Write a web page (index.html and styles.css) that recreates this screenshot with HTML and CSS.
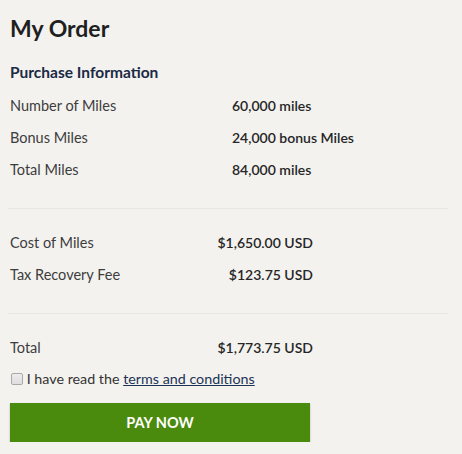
FILE: index.html
```html
<!DOCTYPE html>
<html>
<head>
<meta charset="utf-8">
<link rel="stylesheet" href="styles.css">
</head>
<body>
<div class="order">
  <h1 class="title">My Order</h1>
  <h2 class="subtitle">Purchase Information</h2>
  <div class="rows miles">
    <div class="label">Number of Miles</div><div class="value">60,000 miles</div>
    <div class="label">Bonus Miles</div><div class="value">24,000 bonus Miles</div>
    <div class="label">Total Miles</div><div class="value">84,000 miles</div>
  </div>
  <div class="divider"></div>
  <div class="rows money cost">
    <div class="label">Cost of Miles</div><div class="value">$1,650.00 USD</div>
    <div class="label">Tax Recovery Fee</div><div class="value">$123.75 USD</div>
  </div>
  <div class="divider"></div>
  <div class="rows money total">
    <div class="label">Total</div><div class="value">$1,773.75 USD</div>
  </div>
  <label class="agree"><input type="checkbox" class="check"> I have read the <a class="link" href="#">terms and conditions</a></label>
  <button class="pay">PAY NOW</button>
</div>
</body>
</html>
```
FILE: styles.css
```css
html, body {
  margin: 0;
  padding: 0;
  background: #f3f2ef;
}
body {
  font-family: "Lato", "Liberation Sans", sans-serif;
  color: #3a3a3a;
}
.order {
  padding: 14px 0 0 10px;
  width: 438px;
  display: flex;
  flex-direction: column;
  align-items: flex-start;
}
.title {
  margin: 0;
  font-size: 23px;
  line-height: 28px;
  font-weight: 700;
  color: #1f1f1f;
}
.subtitle {
  margin: 20px 0 0 0;
  font-size: 15.5px;
  line-height: 20px;
  font-weight: 700;
  color: #1b2a45;
}
.rows {
  display: grid;
  font-size: 14.5px;
  line-height: 32px;
}
.miles {
  margin-top: 8px;
  grid-template-columns: 222px auto;
}
.money {
  grid-template-columns: 200px 103px;
}
.money .value {
  text-align: right;
}
.cost {
  margin-top: 18px;
}
.total {
  margin-top: 18px;
}
.label {
  color: #3d3d3d;
}
.value {
  color: #262626;
  font-size: 14px;
  font-weight: 600;
}
.divider {
  margin: 22px 0 0 -2px;
  width: 440px;
  height: 1px;
  background: #e8e7e3;
}
.agree {
  margin-top: 5px;
  display: flex;
  align-items: center;
  font-size: 14.3px;
  line-height: 20px;
  color: #333;
  white-space: pre;
}
.check {
  appearance: none;
  -webkit-appearance: none;
  margin: 0 0 0 1px;
  width: 12px;
  height: 12px;
  border: 1px solid #a9a9a9;
  border-radius: 2px;
  background: linear-gradient(#ececec, #dedede);
}
.link {
  color: #1d3356;
  text-decoration: underline;
}
.pay {
  margin-top: 14px;
  width: 300px;
  height: 39px;
  border: 0;
  background: #4a8a0c;
  color: #fff;
  font-family: inherit;
  font-size: 14.5px;
  font-weight: 700;
  box-shadow: 0 1px 2px rgba(0,0,0,0.25);
  cursor: pointer;
}
```
